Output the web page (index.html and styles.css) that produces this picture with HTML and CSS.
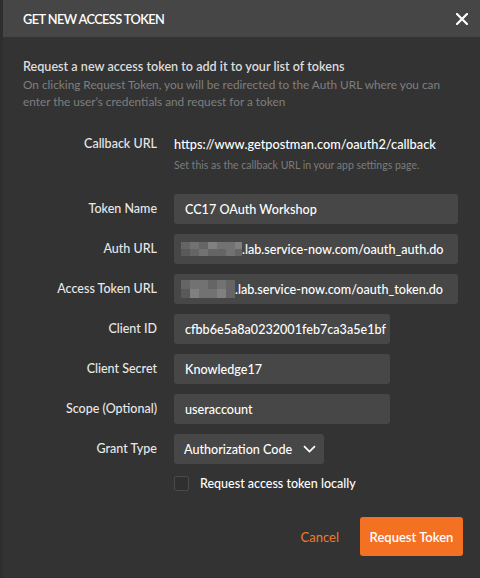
FILE: index.html
```html
<!DOCTYPE html>
<html>
<head>
<meta charset="utf-8">
<link rel="stylesheet" href="styles.css">
</head>
<body>
<div class="modal">
  <div class="header">
    <span class="title">GET NEW ACCESS TOKEN</span>
    <svg class="close" width="12" height="12" viewBox="0 0 12 12"><path d="M1 1L11 11M11 1L1 11" stroke="#fff" stroke-width="2.2" stroke-linecap="square"/></svg>
  </div>
  <div class="content">
    <div class="intro">
      <div class="lead">Request a new access token to add it to your list of tokens</div>
      <div class="sub">On clicking Request Token, you will be redirected to the Auth URL where you can enter the user’s credentials and request for a token</div>
    </div>
    <div class="form">
      <div class="label">Callback URL</div>
      <div class="callback">
        <div class="cb-url">https://www.getpostman.com/oauth2/callback</div>
        <div class="hint">Set this as the callback URL in your app settings page.</div>
      </div>

      <div class="label">Token Name</div>
      <div class="input full">CC17 OAuth Workshop</div>

      <div class="label">Auth URL</div>
      <div class="input full"><span class="mosaic m-a"><i class="c2"></i><i class="c3"></i><i class="c2"></i><i class="c4"></i><i class="c3"></i><i class="c3"></i><i class="c4"></i><i class="c1"></i><i class="c2"></i><i class="c3"></i><i class="c2"></i><i class="c2"></i><i class="c3"></i><i class="c2"></i></span>.lab.service-now.com/oauth_auth.do</div>

      <div class="label">Access Token URL</div>
      <div class="input full"><span class="mosaic m-b"><i class="c2"></i><i class="c3"></i><i class="c3"></i><i class="c2"></i><i class="c3"></i><i class="c2"></i><i class="c1"></i><i class="c4"></i><i class="c3"></i><i class="c3"></i><i class="c4"></i><i class="c2"></i></span>.lab.service-now.com/oauth_token.do</div>

      <div class="label">Client ID</div>
      <div class="input mid"><span class="clip">cfbb6e5a8a0232001feb7ca3a5e1bf</span></div>

      <div class="label">Client Secret</div>
      <div class="input mid">Knowledge17</div>

      <div class="label">Scope (Optional)</div>
      <div class="input mid">useraccount</div>

      <div class="label">Grant Type</div>
      <div class="input select"><span>Authorization Code</span>
        <svg class="chev" width="13" height="8" viewBox="0 0 13 8"><path d="M1 1.2L6.5 6.6L12 1.2" fill="none" stroke="#fff" stroke-width="1.7"/></svg>
      </div>

      <div class="spacer"></div>
      <label class="check"><span class="box"></span>Request access token locally</label>
    </div>
    <div class="footer">
      <span class="cancel">Cancel</span>
      <span class="primary">Request Token</span>
    </div>
  </div>
</div>
</body>
</html>
```
FILE: styles.css
```css
html, body {
  margin: 0;
  padding: 0;
  background: #333333;
  width: 480px;
  height: 578px;
  overflow: hidden;
}
body {
  font-family: "Lato", "Open Sans", sans-serif;
  color: #eeeeee;
}
.modal {
  border-left: 3px solid #2e2e2e;
  height: 578px;
  box-sizing: border-box;
}
.header {
  height: 37px;
  background: #464646;
  display: flex;
  align-items: center;
  justify-content: space-between;
  padding: 0 12px 0 20px;
}
.title {
  font-size: 12.8px;
  font-weight: 600;
  color: #ffffff;
  letter-spacing: -0.6px;
}
.close {
  display: block;
}
.content {
  padding: 21px 17px 0 20px;
}
.intro {
  line-height: 17px;
  max-width: 420px;
}
.lead {
  font-size: 12.6px;
  font-weight: 600;
  color: #dddddd;
  margin-bottom: 1px;
  white-space: nowrap;
}
.sub {
  font-size: 11.8px;
  color: #7f7f7f;
}
.form {
  display: grid;
  grid-template-columns: 134px 284px;
  column-gap: 17px;
  row-gap: 10px;
  margin-top: 19px;
  align-items: center;
}
.label {
  text-align: right;
  font-size: 12.5px;
  font-weight: 500;
  color: #e8e8e8;
  align-self: start;
  line-height: 30px;
}
.callback {
  margin-bottom: 12px;
}
.cb-url {
  font-size: 12.75px;
  font-weight: 500;
  color: #ffffff;
  line-height: 30px;
}
.hint {
  font-size: 10.5px;
  color: #7c7c7c;
  line-height: 14px;
  margin-top: -1px;
}
.input {
  height: 30px;
  box-sizing: border-box;
  background: #474747;
  border-radius: 3px;
  padding: 0 11px;
  display: flex;
  align-items: center;
  font-size: 12.6px;
  font-weight: 500;
  color: #ffffff;
  white-space: nowrap;
  overflow: hidden;
}
.input.mid { width: 216px; }
.clip {
  display: block;
  width: 203px;
  overflow: hidden;
  flex-shrink: 0;
}
.input.select {
  width: 150px;
  padding: 0 10px;
}
.chev {
  flex-shrink: 0;
  margin-left: 11px;
  display: block;
}
.input.full .mosaic { margin-left: -4px; }
.mosaic {
  display: grid;
  flex-shrink: 0;
}
.mosaic i { display: block; }
.m-a {
  grid-template-columns: repeat(7, 9px);
  grid-template-rows: 7px 7px;
  width: 61px;
  overflow: hidden;
}
.m-b {
  grid-template-columns: repeat(6, 9px);
  grid-template-rows: 9px 9px;
  width: 54px;
  overflow: hidden;
}
.c1 { background: #595959; }
.c2 { background: #656565; }
.c3 { background: #727272; }
.c4 { background: #808080; }
.spacer { height: 18px; }
.check {
  display: flex;
  align-items: center;
  font-size: 12.5px;
  font-weight: 500;
  color: #ffffff;
  height: 18px;
}
.box {
  width: 15px;
  height: 15px;
  box-sizing: border-box;
  border: 1px solid #4a4a4a;
  border-radius: 2px;
  background: #2f2f2f;
  margin-right: 11px;
}
.footer {
  display: flex;
  justify-content: flex-end;
  align-items: center;
  margin-top: 25px;
}
.cancel {
  color: #f07b2c;
  font-size: 13px;
  margin-right: 21px;
}
.primary {
  background: #f47023;
  color: #ffffff;
  font-size: 13px;
  font-weight: 600;
  border-radius: 3px;
  height: 39px;
  width: 103px;
  display: flex;
  align-items: center;
  justify-content: center;
}
```
